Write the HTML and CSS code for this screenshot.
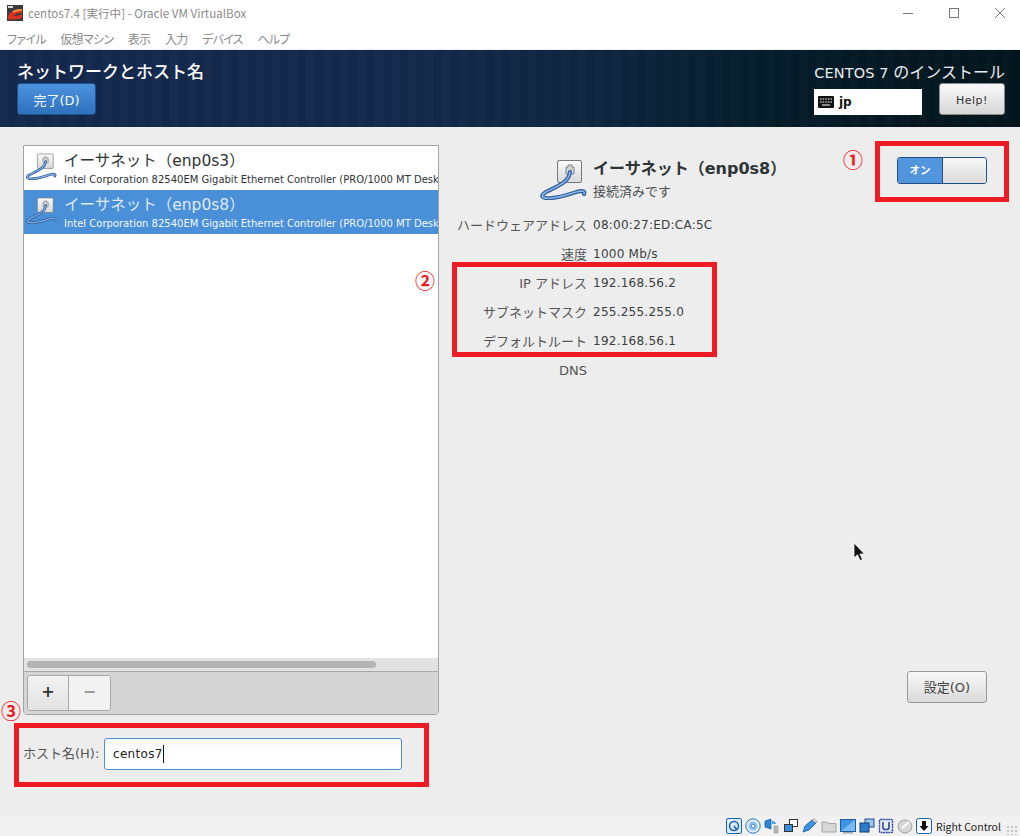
FILE: index.html
```html
<!DOCTYPE html>
<html lang="ja">
<head>
<meta charset="utf-8">
<title>centos7.4 [実行中] - Oracle VM VirtualBox</title>
<link rel="stylesheet" href="styles.css">
</head>
<body>
<svg class="defs" width="0" height="0">
  <defs>
    <linearGradient id="plate" x1="0" y1="0" x2="0" y2="1"><stop offset="0" stop-color="#fbfbfb"/><stop offset="1" stop-color="#d8d8d8"/></linearGradient>
    <symbol id="net" viewBox="0 0 60 50">
      <rect x="27.5" y="10.5" width="24" height="22" rx="1.5" fill="url(#plate)" stroke="#77797c"/>
      <path d="M36 24v-7h2v-2h4v2h2v7z" fill="#cfd0d2" stroke="#85878a"/>
      <path d="M40 22C39 32 28 36 16 42C9 46 12 49 22 48C34 47 44 42 51 41C54 41 55 42 54 44" fill="none" stroke="#2f5f9f" stroke-width="4" stroke-linecap="round"/>
      <path d="M40 22C39 32 28 36 16 42C9 46 12 49 22 48C34 47 44 42 51 41C54 41 55 42 54 44" fill="none" stroke="#8db6e6" stroke-width="1.6" stroke-linecap="round"/>
    </symbol>
  </defs>
</svg>

<div class="titlebar">
  <div class="title-left">
    <svg class="app-icon" viewBox="0 0 16 16"><rect width="16" height="16" fill="#3a3a3c"/><rect x="1" y="1" width="5" height="2" fill="#d8d8d8"/><path d="M1 11C3 6 8 5 15 4V8C10 8 8 9 7 11C10 11 13 10 15 9V13C10 15 4 15 1 14z" fill="#d8321e"/><path d="M6 6C9 4 12 4 15 4V6C11 6 8 7 6 8z" fill="#f08a3c"/></svg>
    <span>centos7.4 [実行中] - Oracle VM VirtualBox</span>
  </div>
  <div class="win-controls">
    <svg viewBox="0 0 12 12"><path d="M1 6.5H11" stroke="#777"/></svg>
    <svg viewBox="0 0 12 12"><rect x="1.5" y="1.5" width="9" height="9" fill="none" stroke="#777"/></svg>
    <svg viewBox="0 0 12 12"><path d="M1 1L11 11M11 1L1 11" stroke="#777"/></svg>
  </div>
</div>
<nav class="menubar">
  <span>ファイル</span><span>仮想マシン</span><span>表示</span><span>入力</span><span>デバイス</span><span>ヘルプ</span>
</nav>

<header class="hero">
  <div class="hero-left">
    <h1>ネットワークとホスト名</h1>
    <button class="btn-done">完了(D)</button>
  </div>
  <div class="hero-right">
    <div class="install-title"><span class="install-latin">CENTOS 7 </span>のインストール</div>
    <div class="hero-controls">
      <div class="kbd-box">
        <svg class="kbd-icon" viewBox="0 0 16 12"><rect width="16" height="12" rx="1" fill="#111"/><path d="M2 3h1.6M4.6 3h1.6M7.2 3h1.6M9.8 3h1.6M12.4 3H14M2 6h1.6M4.6 6h1.6M7.2 6h1.6M9.8 6h1.6M12.4 6H14M4 9h8" stroke="#fff" stroke-width="1.2"/></svg>
        <span>jp</span>
      </div>
      <button class="btn-help">Help!</button>
    </div>
  </div>
</header>

<main class="content">
  <section class="left">
    <div class="panel">
      <div class="list">
        <div class="row">
          <svg class="row-icon"><use href="#net"/></svg>
          <div class="row-text">
            <div class="row-name">イーサネット（enp0s3）</div>
            <div class="row-desc">Intel Corporation 82540EM Gigabit Ethernet Controller (PRO/1000 MT Desk</div>
          </div>
        </div>
        <div class="row selected">
          <svg class="row-icon"><use href="#net"/></svg>
          <div class="row-text">
            <div class="row-name">イーサネット（enp0s8）</div>
            <div class="row-desc">Intel Corporation 82540EM Gigabit Ethernet Controller (PRO/1000 MT Desk</div>
          </div>
        </div>
      </div>
      <div class="scroll-track"><div class="scroll-thumb"></div></div>
      <div class="toolbar">
        <div class="seg">
          <button class="seg-btn plus">+</button>
          <button class="seg-btn minus">−</button>
        </div>
      </div>
    </div>
    <div class="host-row">
      <label class="host-label">ホスト名(H):</label>
      <div class="host-input">centos7<span class="caret"></span></div>
    </div>
  </section>

  <section class="right">
    <div class="right-top">
      <div class="details">
        <div class="dev-head">
          <svg class="dev-icon"><use href="#net"/></svg>
          <div class="dev-text">
            <div class="dev-name">イーサネット（enp0s8）</div>
            <div class="dev-status">接続済みです</div>
          </div>
        </div>
        <dl class="props">
          <dt>ハードウェアアドレス</dt><dd>08:00:27:ED:CA:5C</dd>
          <dt>速度</dt><dd>1000 Mb/s</dd>
          <dt>IP アドレス</dt><dd>192.168.56.2</dd>
          <dt>サブネットマスク</dt><dd>255.255.255.0</dd>
          <dt>デフォルトルート</dt><dd>192.168.56.1</dd>
          <dt>DNS</dt><dd></dd>
        </dl>
      </div>
      <div class="switch"><div class="switch-on">オン</div><div class="switch-knob"></div></div>
    </div>
    <button class="btn-settings">設定(O)</button>
  </section>
</main>

<footer class="statusbar">
  <svg viewBox="0 0 16 16"><rect x=".5" y=".5" width="15" height="15" rx="1.5" fill="#dbeeff" stroke="#1d62b0"/><circle cx="8" cy="8" r="4.5" fill="none" stroke="#1d62b0" stroke-width="1.5"/><path d="M8 8L11 12" stroke="#1d62b0" stroke-width="1.5"/></svg>
  <svg viewBox="0 0 16 16"><circle cx="8" cy="8" r="7.2" fill="#e6f0fb" stroke="#2a72c0"/><circle cx="8" cy="8" r="4.5" fill="#8cc0ee"/><circle cx="8" cy="8" r="1.8" fill="#fff" stroke="#2a72c0" stroke-width=".7"/></svg>
  <svg viewBox="0 0 16 16"><path d="M1 3L7 1V11L1 9z" fill="#2a86d6" stroke="#155a9e" stroke-width=".7"/><path d="M8 3h2l2 2v1H8z" fill="#57a7e6"/><rect x="10" y="8" width="4" height="7" fill="#b8b8b8" stroke="#888" stroke-width=".5"/></svg>
  <svg viewBox="0 0 16 16"><rect x="6.500" y="1.500" width="8" height="7" fill="#fff" stroke="#333"/><rect x="1.500" y="6.500" width="8" height="7" fill="#3b8ddb" stroke="#333"/></svg>
  <svg viewBox="0 0 16 16"><path d="M1 14L3 8L10 2L14 5L7 12z" fill="#3a92e0" stroke="#17609f" stroke-width=".8"/><path d="M10 2L12 0.8L15.2 3.5L14 5z" fill="#e8e8e8" stroke="#777" stroke-width=".6"/></svg>
  <svg viewBox="0 0 16 16"><path d="M1 4h5l1 1.5h8V14H1z" fill="#d8d8d8" stroke="#a6a6a6"/></svg>
  <svg viewBox="0 0 16 16"><rect x=".5" y="1.5" width="15" height="12" fill="#3f96e4" stroke="#1b5d9e"/><path d="M1 13L15 2V13z" fill="#78bbf0"/><rect x="3" y="14" width="10" height="1.5" fill="#9aa6b0"/></svg>
  <svg viewBox="0 0 16 16"><rect x="6" y="1" width="9" height="8" fill="#9bc8f0" stroke="#1b4f8a"/><rect x="1" y="5" width="9" height="9" fill="#2a7cd0" stroke="#12406f"/></svg>
  <svg viewBox="0 0 16 16"><rect x="1.5" y="1.5" width="13" height="13" rx="1" fill="#e9eefc" stroke="#2b4aa0" stroke-width="1.4" stroke-dasharray="2 .6"/><path d="M5 4v6c0 2 6 2 6 0V4" fill="none" stroke="#2b4aa0" stroke-width="1.6"/></svg>
  <svg viewBox="0 0 16 16"><ellipse cx="8" cy="8.5" rx="7" ry="6.5" fill="#d6d6d6" stroke="#a0a0a0"/><path d="M5 10L12 4" stroke="#fff" stroke-width="2"/></svg>
  <svg viewBox="0 0 16 16"><rect x=".5" y=".5" width="15" height="15" rx="2" fill="#f4f7fb" stroke="#1f5fa8"/><path d="M6 3h4v5h2.5L8 13 3.500 8H6z" fill="#111"/></svg>
  <span class="host-key">Right Control</span>
  <span class="grip"></span>
</footer>

<div class="mark frame-1"></div>
<div class="mark frame-2"></div>
<div class="mark frame-3"></div>
<span class="circled c1">①</span>
<span class="circled c2">②</span>
<span class="circled c3">③</span>
<svg class="cursor" viewBox="0 0 13 20"><path d="M1 1V16L4.500 12.800L7 18.500L9.500 17.500L7 12H11.500z" fill="#111" stroke="#fff" stroke-width=".8"/></svg>
</body>
</html>
```

FILE: styles.css
```css
* { box-sizing: border-box; }
html, body { margin: 0; padding: 0; height: 100%; overflow: hidden; }
body {
  width: 1020px; height: 836px; position: relative;
  display: flex; flex-direction: column;
  background: #ededed;
  font-family: "DejaVu Sans", "Noto Sans CJK JP", sans-serif;
  color: #2e3436;
}
.defs { position: absolute; }
button { font-family: inherit; cursor: default; }

.titlebar {
  height: 25px; background: #fff; display: flex; justify-content: space-between; align-items: center;
  padding-left: 7px; font-family: "Noto Sans CJK JP", sans-serif; font-size: 11.600px; color: #8a8a8a; flex: none;
}
.title-left { display: flex; align-items: center; gap: 5px; }
.app-icon { width: 16px; height: 16px; }
.win-controls { display: flex; gap: 34px; padding-right: 14px; }
.win-controls svg { width: 12px; height: 12px; }
.menubar {
  height: 24px; background: #fff; display: flex; gap: 14.500px; padding: 5px 0 0 7px; flex: none;
  font-family: "Noto Sans CJK JP", sans-serif; font-size: 12px; color: #8a8a8a;
  font-feature-settings: "palt"; letter-spacing: -.7px;
}
.hero {
  height: 78px; flex: none; border-top: 1px solid #eef0f2; display: flex; justify-content: space-between;
  padding: 0 15px 0 17px;
  background:
    repeating-linear-gradient(90deg, rgba(255,255,255,.012) 0 9px, rgba(0,0,0,.025) 9px 17px),
    linear-gradient(90deg, #14294e 0%, #15294d 38%, #0f2540 58%, #051c2a 76%, #03151c 100%);
}
.hero-left h1 {
  margin: 11px 0 0; font-size: 17px; line-height: 20px; font-weight: 500; color: #fff;
  font-family: "Noto Sans CJK JP", sans-serif;
}
.btn-done {
  display: block; margin-top: 2px; width: 79px; height: 32px; border: 1px solid #1d4f8a; border-radius: 3px;
  background: linear-gradient(#4c93dd, #2e71bd); color: #f4f8fc; font-size: 13px; padding: 0;
}
.hero-right { width: 191px; display: flex; flex-direction: column; }
.install-title {
  margin-top: 11px; height: 20px; text-align: right; font-size: 16px; line-height: 20px; color: #e8ecef;
  white-space: nowrap; font-family: "Noto Sans CJK JP", sans-serif;
}
.install-latin { font-family: "DejaVu Sans", sans-serif; font-size: 14.500px; letter-spacing: .1px; }
.hero-controls { display: flex; justify-content: space-between; align-items: flex-end; height: 32px; margin-top: 2px; }
.kbd-box {
  width: 108px; height: 26px; background: #fff; display: flex; align-items: center; gap: 5px; padding-left: 4px;
  color: #111; font-size: 12px; font-weight: 700;
}
.kbd-icon { width: 16px; height: 12px; }
.btn-help {
  width: 66px; height: 32px; border: 1px solid #8a8a8a; border-radius: 3px;
  background: linear-gradient(#fafafa, #d6d6d6); color: #333; font-size: 11px; letter-spacing: .5px; padding: 2px 0 0;
}

.content { flex: 1; min-height: 0; display: flex; padding: 18px 15px 0 23px; }
.left { width: 416px; display: flex; flex-direction: column; flex: none; }
.panel {
  height: 570px; border: 1px solid #a4a4a4; border-radius: 0 0 4px 4px; display: flex; flex-direction: column;
  background: #fff; overflow: hidden;
}
.list { flex: 1; min-height: 0; background: #fff; overflow: hidden; }
.row { height: 44px; display: flex; align-items: flex-start; white-space: nowrap; overflow: hidden; }
.row-icon { width: 40px; height: 33px; margin: 1px 5px 0 -5px; flex: none; }
.row-text { padding-top: 3px; min-width: 0; }
.row-name { font-size: 15.500px; line-height: 24px; color: #2e3436; }
.row-desc { font-size: 10px; line-height: 13px; color: #2e3436; }
.selected { background: #4a90d9; }
.selected .row-desc { color: #f3f7fc; }
.selected .row-name { color: #dfeafa; }
.scroll-track { height: 14px; background: #e2e2e2; border-bottom: 1px solid #a8a8a8; padding: 3px; flex: none; }
.scroll-thumb { width: 349px; height: 7px; border-radius: 4px; background: #b4b4b4; }
.toolbar { height: 42px; background: #d5d5d5; padding: 3px 0 0 3px; flex: none; }
.seg { display: inline-flex; height: 36px; border: 1px solid #a8a8a8; border-radius: 3px; overflow: hidden; }
.seg-btn { width: 41px; height: 34px; border: 0; padding: 0 0 2px; font-size: 16px; line-height: 30px; font-weight: 700; }
.plus { background: linear-gradient(#f2f2f2, #e2e2e2); color: #2e3436; border-right: 1px solid #a8a8a8; }
.minus { background: #f2f2f2; color: #9a9a9a; }
.host-row { display: flex; align-items: center; height: 32px; margin-top: 23px; }
.host-label { width: 81px; font-size: 13px; color: #555; flex: none; white-space: nowrap; padding-bottom: 3px; }
.host-input {
  width: 298px; height: 32px; border: 1px solid #4a90d9; border-radius: 3px; display: flex; align-items: center;
  padding-left: 8px; background: linear-gradient(#f6f6f6 0, #fff 40%); font-size: 12px; color: #222; letter-spacing: .3px;
}
.caret { width: 1px; height: 18px; background: #111; }

.right { flex: 1; display: flex; flex-direction: column; padding-left: 18px; padding-bottom: 113px; }
.right-top { display: flex; justify-content: space-between; align-items: flex-start; }
.details { width: 260px; }
.dev-head { display: flex; margin-top: 5px; height: 61px; padding-left: 73px; }
.dev-icon { width: 60px; height: 50px; flex: none; margin-right: 3px; }
.dev-text { padding-top: 8px; white-space: nowrap; }
.dev-name { font-size: 16px; line-height: 22px; font-weight: 700; color: #2e3436; }
.dev-status { font-size: 13px; line-height: 21px; color: #4a4f50; font-family: "Noto Sans CJK JP", sans-serif; }
.props { display: grid; grid-template-columns: 130px 1fr; column-gap: 6px; grid-auto-rows: 29px; margin: 0; font-size: 12px; line-height: 29px; white-space: nowrap; }
.props dt { text-align: right; color: #555; font-size: 13px; }
.props dd { margin: 0; color: #3a3f40; letter-spacing: .25px; }
.switch { display: flex; width: 90px; height: 27px; margin: 12px 18px 0 0; border: 1px solid #1f4f86; border-radius: 3px; overflow: hidden; flex: none; }
.switch-on { width: 45px; background: #5196dd; color: #fff; font-size: 10.500px; font-weight: 700; text-align: center; line-height: 24px; border-right: 1px solid #1f4f86; }
.switch-knob { flex: 1; background: linear-gradient(#f6f6f6, #dcdcdc); }
.btn-settings {
  margin-top: auto; align-self: flex-end; margin-right: 18px; width: 80px; height: 32px; padding: 0 0 2px; border: 1px solid #9a9a9a; border-radius: 3px;
  background: linear-gradient(#f8f8f8, #dadada); color: #444; font-size: 13px;
}

.statusbar {
  height: 20px; flex: none; background: #f0f0f0; display: flex; align-items: center; gap: 3px; padding-left: 726px;
  font-family: "Noto Sans CJK JP", sans-serif; font-size: 10.500px; color: #222; position: relative;
}
.statusbar svg { width: 16px; height: 16px; flex: none; }
.host-key { margin-left: 1px; white-space: nowrap; }
.grip {
  position: absolute; right: 2px; bottom: 1px; width: 12px; height: 10px;
  background: radial-gradient(circle, #c8c8c8 1px, transparent 1.200px) 0 0 / 4px 4px;
}

.mark { position: absolute; border: 5px solid #ed1c24; }
.frame-1 { left: 875px; top: 141px; width: 134px; height: 61px; }
.frame-2 { left: 452px; top: 262px; width: 265px; height: 95px; }
.frame-3 { left: 14px; top: 723px; width: 415px; height: 64px; }
.circled { position: absolute; color: #ed1c24; font-size: 20px; font-weight: 700; line-height: 22px; font-family: "Noto Sans CJK JP", sans-serif; }
.c1 { left: 843px; top: 149px; }
.c2 { left: 415px; top: 270px; }
.c3 { left: 1px; top: 700px; }
.cursor { position: absolute; left: 853px; top: 542px; width: 13px; height: 20px; }
```
